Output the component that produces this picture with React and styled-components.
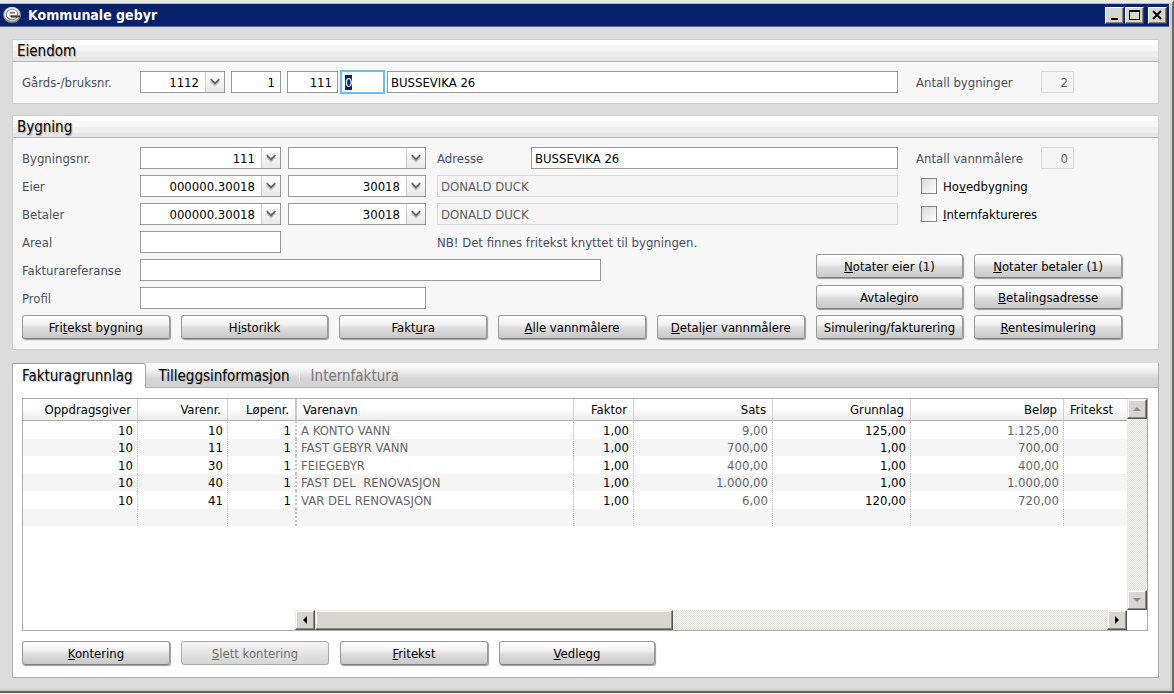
import React, { useEffect, useRef } from "react";
import styled, { createGlobalStyle, css } from "styled-components";

const FONT = '"DejaVu Sans Condensed", "DejaVu Sans", sans-serif';
const NAVY = "#08216b";

const GlobalStyle = createGlobalStyle`
  *, *::before, *::after { box-sizing: border-box; }
  body { margin: 0; background: #ededed; font-family: ${FONT}; font-size: 13px; color: #000; }
  button, input, select { font: inherit; color: inherit; margin: 0; }
  ::selection { background: ${NAVY}; color: #fff; }
`;

const Window = styled.div`
  display: flex;
  flex-direction: column;
  min-height: calc(100vh - 1px);
  background: #dcdcdc;
  border-style: solid;
  border-color: #e9e9e4 #6a6b6b #5d5e5e;
  border-width: 3px 2px 2px 0;
  box-shadow: inset -2px -2px 0 #d2d2c9, inset 0 1px 0 #b9b9b4;
  padding: 1px 3px 2px 0;
`;

const TitleBar = styled.header`
  display: flex;
  align-items: center;
  height: 23px;
  padding: 0 2px 0 2px;
  background: ${NAVY};
  border-bottom: 1px solid #5a6a9a;
  color: #fff;
`;

const Title = styled.h1`
  flex: 1;
  margin: 0 0 0 6px;
  font-size: 14px;
  font-weight: bold;
`;

const CaptionButtons = styled.div`
  display: flex;
  gap: 1px;
`;

const CaptionButton = styled.button`
  display: grid;
  place-items: center;
  width: 19px;
  height: 17px;
  padding: 0;
  margin-left: ${(p) => (p.$apart ? 3 : 0)}px;
  background: #d6d6ce;
  border: 1px solid;
  border-color: #fff #404040 #404040 #fff;
  box-shadow: inset -1px -1px 0 #84847e;
`;

const Content = styled.main`
  flex: 1;
  display: flex;
  flex-direction: column;
  gap: 11px;
  padding: 12px 10px 11px 12px;
`;

const Panel = styled.section`
  background: #f7f7f7;
  border: 1px solid #cdcdcd;
`;

const PanelTitle = styled.h2`
  height: 22px;
  margin: 0;
  padding-left: 4px;
  font-size: 15px;
  font-weight: normal;
  line-height: 22px;
  text-shadow: 1px 1px 1px #aaa;
  background: linear-gradient(#fff 0 5px, #f6f6f6 5px 11px, #eee 11px 17px, #e5e5e5 17px);
  border-bottom: 1px solid #b5b5b5;
`;

const PanelBody = styled.div`
  display: flex;
  flex-direction: column;
  gap: 6px;
  padding: 9px 36px 10px 9px;
`;

const Row = styled.div`
  display: flex;
  align-items: center;
  min-height: 22px;
`;

const FieldLabel = styled.label`
  flex: none;
  width: ${(p) => p.$width || 118}px;
  color: #4a5063;
`;

const Fields = styled.div`
  flex: 1;
  display: flex;
  align-items: center;
  gap: ${(p) => p.$gap || 7}px;
  min-width: 0;
`;

const AddressPair = styled.div`
  flex: 1;
  display: flex;
  gap: 3px;
  min-width: 0;
  margin-left: -3px;
`;

const Detail = styled.div`
  flex: 1;
  display: flex;
  align-items: center;
  min-width: 0;
  margin-left: 4px;
`;

const Side = styled.div`
  flex: none;
  display: flex;
  align-items: center;
  width: 206px;
  margin-left: 18px;
`;

const boxStyle = css`
  height: 22px;
  padding: 0 5px 0 3px;
  background: #fff;
  border: 1px solid #999;
  border-radius: 0;
  outline: none;
`;

const TextBox = styled.input`
  ${boxStyle}
  ${(p) => (p.$width ? `flex: none; width: ${p.$width}px;` : "flex: 1; width: 0; min-width: 0;")}
  text-align: ${(p) => (p.$right ? "right" : "left")};
  &:read-only {
    background: #f5f5f5;
    border-color: #d9d9d9;
    color: #606060;
  }
  &:focus {
    border-color: #6cbdec;
    box-shadow: 0 0 0 1px #6cbdec;
  }
`;

const ComboFrame = styled.span`
  flex: none;
  display: grid;
  grid-template-columns: 1fr 20px;
  width: ${(p) => p.$width}px;
`;

const ComboSelect = styled.select`
  ${boxStyle}
  grid-area: 1 / 1 / 2 / 3;
  appearance: none;
  width: 100%;
  padding: 0 25px 0 4px;
  text-align-last: right;
`;

const ComboArrow = styled.svg`
  grid-area: 1 / 2;
  width: 19px;
  height: 20px;
  margin-top: 1px;
  pointer-events: none;
  border-left: 1px solid #ccc;
  background: linear-gradient(#fff, #e9e9e9);
`;

const CheckLabel = styled.label`
  display: flex;
  align-items: center;
  gap: 6px;
  padding-left: 5px;
`;

const CheckBox = styled.input`
  appearance: none;
  width: 16px;
  height: 16px;
  border: 1px solid #858585;
  background: linear-gradient(135deg, #d9d9d9, #fff);
`;

const Note = styled.p`
  margin: 0 0 0 156px;
  color: #4a5063;
`;

const ButtonGrid = styled.div`
  display: grid;
  grid-template-columns: repeat(7, minmax(0, 1fr));
  gap: 6px 11px;
`;

const LeftRows = styled.div`
  grid-column: span 5;
  display: flex;
  flex-direction: column;
  gap: 6px;
`;

const RightButtons = styled.div`
  grid-column: span 2;
  align-self: end;
  display: grid;
  grid-template-columns: 1fr 1fr;
  gap: 7px 11px;
`;

const PushButton = styled.button`
  height: 24px;
  padding: 0 2px;
  border: 1px solid #999;
  border-bottom-color: #808080;
  border-radius: 3px;
  background: linear-gradient(#fff, #f0f0f0 40%, #dcdcdc 55%, #c9c9c9);
  box-shadow: 1px 1px 1px #999;
  white-space: nowrap;
  &:disabled {
    color: #6e6e6e;
    border-color: #aaa;
    background: linear-gradient(#f4f4f4, #d5d5d5);
    box-shadow: none;
  }
`;

const TabPanel = styled.section`
  flex: 1;
  display: flex;
  flex-direction: column;
  margin-top: 2px;
  background: #fff;
  border: 1px solid #adadad;
  border-top: 0;
`;

const TabStrip = styled.div`
  display: flex;
  height: 25px;
  border-bottom: 1px solid #b3b3b3;
  background: linear-gradient(#fafafa 0 4px, #ececec 9px, #d6d6d6 15px, #d2d2d2);
`;

const Tab = styled.button`
  height: ${(p) => (p.$active ? 25 : 24)}px;
  padding: ${(p) => (p.$active ? "0 12px 0 9px" : "0 8px 0 13px")};
  border: 0;
  border-top: 1px solid ${(p) => (p.$active ? "#9c9c9c" : "transparent")};
  border-right: 1px solid ${(p) => (p.$active ? "#a5a5a5" : "transparent")};
  border-radius: 0 3px 0 0;
  background: ${(p) => (p.$active ? "#fff" : "transparent")};
  font-size: 15px;
  text-shadow: 1px 1px 1px #bbb;
  &:disabled { color: #777; text-shadow: none; padding-left: 11px; }
`;

const TabDivider = styled.span`
  width: 1px;
  height: 14px;
  margin-top: 5px;
  background: #f6f6f6;
`;

const TabBody = styled.div`
  flex: 1;
  display: flex;
  flex-direction: column;
  gap: 10px;
  padding: 10px 10px 12px 9px;
`;

const ListBox = styled.div`
  flex: 1;
  display: grid;
  grid-template-columns: minmax(0, 1fr) 20px;
  grid-template-rows: minmax(128px, 1fr) 20px;
  border: 1px solid #adadad;
`;

const Table = styled.table`
  width: 100%;
  align-self: start;
  table-layout: fixed;
  border-collapse: separate;
  border-spacing: 0;
`;

const HeadCell = styled.th`
  height: 22px;
  padding: 0 6px;
  font-weight: normal;
  text-align: ${(p) => (p.$left ? "left" : "right")};
  border-right: 1px solid #d0d0d0;
  border-bottom: 1px solid #ababab;
  background: linear-gradient(#fff 40%, #ececec);
  &:nth-child(3) { border-right: 2px solid #c6c6c6; }
  &:last-child { border-right: 0; }
`;

const Cell = styled.td`
  padding: 0 4px;
  line-height: 15px;
  white-space: pre;
  text-align: ${(p) => (p.$left ? "left" : "right")};
  color: ${(p) => (p.$muted ? "#666" : "#000")};
  border-right: 1px dotted #c4c4c4;
  &:nth-child(3) { border-right-width: 2px; }
  &:last-child { border-right: 0; }
`;

const BodyRow = styled.tr`
  height: 18px;
  &:nth-child(even) { height: 17px; background: #f5f5f5; }
`;

const trackStyle = css`
  background: repeating-conic-gradient(#e2e2dc 0 25%, #f3f3f0 0 50%) 0 0 / 2px 2px;
`;

const VScroll = styled.div`
  ${trackStyle}
  display: flex;
  flex-direction: column;
  justify-content: space-between;
`;

const HScroll = styled.div`
  ${trackStyle}
  display: flex;
  margin-left: 272px;
`;

const raised = css`
  background: #d6d6ce;
  border: 1px solid;
  border-color: #f6f6f2 #555 #555 #e6e6e0;
  box-shadow: inset -1px -1px 0 #8a8a84, inset 1px 1px 0 #fff;
`;

const ScrollButton = styled.button`
  ${raised}
  display: grid;
  place-items: center;
  flex: none;
  width: 20px;
  height: 20px;
  padding: 0;
`;

const Thumb = styled.div`
  ${raised}
  width: 43%;
  margin-right: auto;
`;

const Actions = styled.div`
  display: grid;
  grid-template-columns: 148px 148px 148px 156px;
  gap: 11px;
`;

function Logo() {
  return (
    <svg width="20" height="18" viewBox="0 0 20 18" aria-hidden="true">
      <ellipse cx="10" cy="9" rx="9" ry="8" fill="#8c8c8c" />
      <ellipse cx="10" cy="8" rx="8" ry="7" fill="#e4e4e4" />
      <ellipse cx="10" cy="8.500" rx="6" ry="5.500" fill="#6b6b6b" />
      <path d="M14 6.500c-1-2.500-7-2.500-8 1-1 4 4 6 8 3.500M6 8.500h8V6" fill="none" stroke="#f4f4f4" strokeWidth="2" />
      <path d="M9 9.500h9v2H9z" fill="#3c3c3c" />
    </svg>
  );
}

function Combo({ id, value = "", width, label }) {
  return (
    <ComboFrame $width={width}>
      <ComboSelect id={id} aria-label={label} defaultValue={value}>
        <option value={value}>{value}</option>
      </ComboSelect>
      <ComboArrow viewBox="0 0 19 20" aria-hidden="true">
        <path d="M5 9l4.500 4.500L14 9" fill="none" stroke="#c4c4c4" strokeWidth="2" />
        <path d="M5 7l4.500 4.500L14 7" fill="none" stroke="#666" strokeWidth="2" />
      </ComboArrow>
    </ComboFrame>
  );
}

function Arrow({ dir, color = "#000" }) {
  const paths = {
    up: "M1 7h8L5 3z",
    down: "M1 3h8L5 7z",
    left: "M7 1v8L3 5z",
    right: "M3 1v8l4-4z",
  };
  return (
    <svg width="10" height="10" viewBox="0 0 10 10" aria-hidden="true">
      <path d={paths[dir]} fill={color} />
    </svg>
  );
}

const ITEMS = [
  ["10", "10", "1", "A KONTO VANN", "1,00", "9,00", "125,00", "1.125,00", ""],
  ["10", "11", "1", "FAST GEBYR VANN", "1,00", "700,00", "1,00", "700,00", ""],
  ["10", "30", "1", "FEIEGEBYR", "1,00", "400,00", "1,00", "400,00", ""],
  ["10", "40", "1", "FAST DEL  RENOVASJON", "1,00", "1.000,00", "1,00", "1.000,00", ""],
  ["10", "41", "1", "VAR DEL RENOVASJON", "1,00", "6,00", "120,00", "720,00", ""],
  ["", "", "", "", "", "", "", "", ""],
];

const COLUMNS = [
  { name: "Oppdragsgiver", width: 115 },
  { name: "Varenr.", width: 90 },
  { name: "Løpenr.", width: 69 },
  { name: "Varenavn", width: 277, left: true, muted: true },
  { name: "Faktor", width: 60 },
  { name: "Sats", width: 139, muted: true },
  { name: "Grunnlag", width: 138 },
  { name: "Beløp", width: 153, muted: true },
  { name: "Fritekst", left: true },
];

export default function App() {
  const focused = useRef(null);
  useEffect(() => {
    focused.current.focus();
    focused.current.select();
  }, []);

  return (
    <>
      <GlobalStyle />
      <Window>
        <TitleBar>
          <Logo />
          <Title>Kommunale gebyr</Title>
          <CaptionButtons>
            <CaptionButton aria-label="Minimer">
              <svg width="13" height="12"><path d="M3 9h7v2H3z" /></svg>
            </CaptionButton>
            <CaptionButton aria-label="Maksimer">
              <svg width="13" height="12"><path d="M1 1h11v10H1zM2 3v7h9V3z" fillRule="evenodd" /></svg>
            </CaptionButton>
            <CaptionButton aria-label="Lukk" $apart>
              <svg width="13" height="12"><path d="M2 2l8 8M10 2l-8 8" stroke="#000" strokeWidth="2" /></svg>
            </CaptionButton>
          </CaptionButtons>
        </TitleBar>

        <Content>
          <Panel>
            <PanelTitle>Eiendom</PanelTitle>
            <PanelBody>
              <Row>
                <FieldLabel htmlFor="gard">Gårds-/bruksnr.</FieldLabel>
                <Fields $gap={6}>
                  <Combo id="gard" value="1112" width={85} />
                  <TextBox aria-label="Gårdsnr." $width={50} $right defaultValue="1" />
                  <TextBox aria-label="Bruksnr." $width={51} $right defaultValue="111" />
                  <AddressPair>
                    <TextBox aria-label="Festenr." $width={43} defaultValue="0" ref={focused} />
                    <TextBox aria-label="Eiendomsadresse" defaultValue="BUSSEVIKA 26" />
                  </AddressPair>
                </Fields>
                <Side>
                  <FieldLabel htmlFor="antbygg" $width={125}>Antall bygninger</FieldLabel>
                  <TextBox id="antbygg" $width={33} $right readOnly value="2" />
                </Side>
              </Row>
            </PanelBody>
          </Panel>

          <Panel>
            <PanelTitle>Bygning</PanelTitle>
            <PanelBody>
              <Row>
                <FieldLabel htmlFor="bygning">Bygningsnr.</FieldLabel>
                <Fields>
                  <Combo id="bygning" value="111" width={141} />
                  <Combo label="Bygningstype" width={138} />
                  <Detail>
                    <FieldLabel htmlFor="adresse" $width={94}>Adresse</FieldLabel>
                    <TextBox id="adresse" defaultValue="BUSSEVIKA 26" />
                  </Detail>
                </Fields>
                <Side>
                  <FieldLabel htmlFor="antvann" $width={125}>Antall vannmålere</FieldLabel>
                  <TextBox id="antvann" $width={33} $right readOnly value="0" />
                </Side>
              </Row>
              <Row>
                <FieldLabel htmlFor="eier">Eier</FieldLabel>
                <Fields>
                  <Combo id="eier" value="000000.30018" width={141} />
                  <Combo label="Eier kundenr." value="30018" width={138} />
                  <Detail>
                    <TextBox aria-label="Eier navn" readOnly value="DONALD DUCK" />
                  </Detail>
                </Fields>
                <Side>
                  <CheckLabel><CheckBox type="checkbox" /><span>Ho<u>v</u>edbygning</span></CheckLabel>
                </Side>
              </Row>
              <Row>
                <FieldLabel htmlFor="betaler">Betaler</FieldLabel>
                <Fields>
                  <Combo id="betaler" value="000000.30018" width={141} />
                  <Combo label="Betaler kundenr." value="30018" width={138} />
                  <Detail>
                    <TextBox aria-label="Betaler navn" readOnly value="DONALD DUCK" />
                  </Detail>
                </Fields>
                <Side>
                  <CheckLabel><CheckBox type="checkbox" /><span><u>I</u>nternfaktureres</span></CheckLabel>
                </Side>
              </Row>
              <ButtonGrid>
                <LeftRows>
                  <Row>
                    <FieldLabel htmlFor="areal">Areal</FieldLabel>
                    <TextBox id="areal" $width={141} />
                    <Note>NB! Det finnes fritekst knyttet til bygningen.</Note>
                  </Row>
                  <Row>
                    <FieldLabel htmlFor="fakturaref">Fakturareferanse</FieldLabel>
                    <TextBox id="fakturaref" $width={461} />
                  </Row>
                  <Row>
                    <FieldLabel htmlFor="profil">Profil</FieldLabel>
                    <TextBox id="profil" $width={286} />
                  </Row>
                </LeftRows>
                <RightButtons>
                  <PushButton><u>N</u>otater eier (1)</PushButton>
                  <PushButton><u>N</u>otater betaler (1)</PushButton>
                  <PushButton>Avtale<u>g</u>iro</PushButton>
                  <PushButton><u>B</u>etalingsadresse</PushButton>
                </RightButtons>
                <PushButton>Fri<u>t</u>ekst bygning</PushButton>
                <PushButton>H<u>i</u>storikk</PushButton>
                <PushButton>Fakt<u>u</u>ra</PushButton>
                <PushButton><u>A</u>lle vannmålere</PushButton>
                <PushButton><u>D</u>etaljer vannmålere</PushButton>
                <PushButton>Simulering/fakturering</PushButton>
                <PushButton><u>R</u>entesimulering</PushButton>
              </ButtonGrid>
            </PanelBody>
          </Panel>

          <TabPanel>
            <TabStrip role="tablist">
              <Tab role="tab" aria-selected="true" $active>Fakturagrunnlag</Tab>
              <Tab role="tab" aria-selected="false">Tilleggsinformasjon</Tab>
              <TabDivider />
              <Tab role="tab" aria-selected="false" disabled>Internfaktura</Tab>
            </TabStrip>
            <TabBody>
              <ListBox>
                <Table>
                  <colgroup>
                    {COLUMNS.map((c) => <col key={c.name} width={c.width} />)}
                  </colgroup>
                  <thead>
                    <tr>
                      {COLUMNS.map((c) => <HeadCell key={c.name} $left={c.left}>{c.name}</HeadCell>)}
                    </tr>
                  </thead>
                  <tbody>
                    {ITEMS.map((item, r) => (
                      <BodyRow key={r}>
                        {item.map((text, i) => (
                          <Cell key={i} $left={COLUMNS[i].left} $muted={COLUMNS[i].muted}>{text}</Cell>
                        ))}
                      </BodyRow>
                    ))}
                  </tbody>
                </Table>
                <VScroll>
                  <ScrollButton aria-label="Rull opp"><Arrow dir="up" color="#8a8a84" /></ScrollButton>
                  <ScrollButton aria-label="Rull ned"><Arrow dir="down" color="#8a8a84" /></ScrollButton>
                </VScroll>
                <HScroll>
                  <ScrollButton aria-label="Rull til venstre"><Arrow dir="left" /></ScrollButton>
                  <Thumb />
                  <ScrollButton aria-label="Rull til høyre"><Arrow dir="right" /></ScrollButton>
                </HScroll>
              </ListBox>
              <Actions>
                <PushButton><u>K</u>ontering</PushButton>
                <PushButton disabled><u>S</u>lett kontering</PushButton>
                <PushButton><u>F</u>ritekst</PushButton>
                <PushButton><u>V</u>edlegg</PushButton>
              </Actions>
            </TabBody>
          </TabPanel>
        </Content>
      </Window>
    </>
  );
}
